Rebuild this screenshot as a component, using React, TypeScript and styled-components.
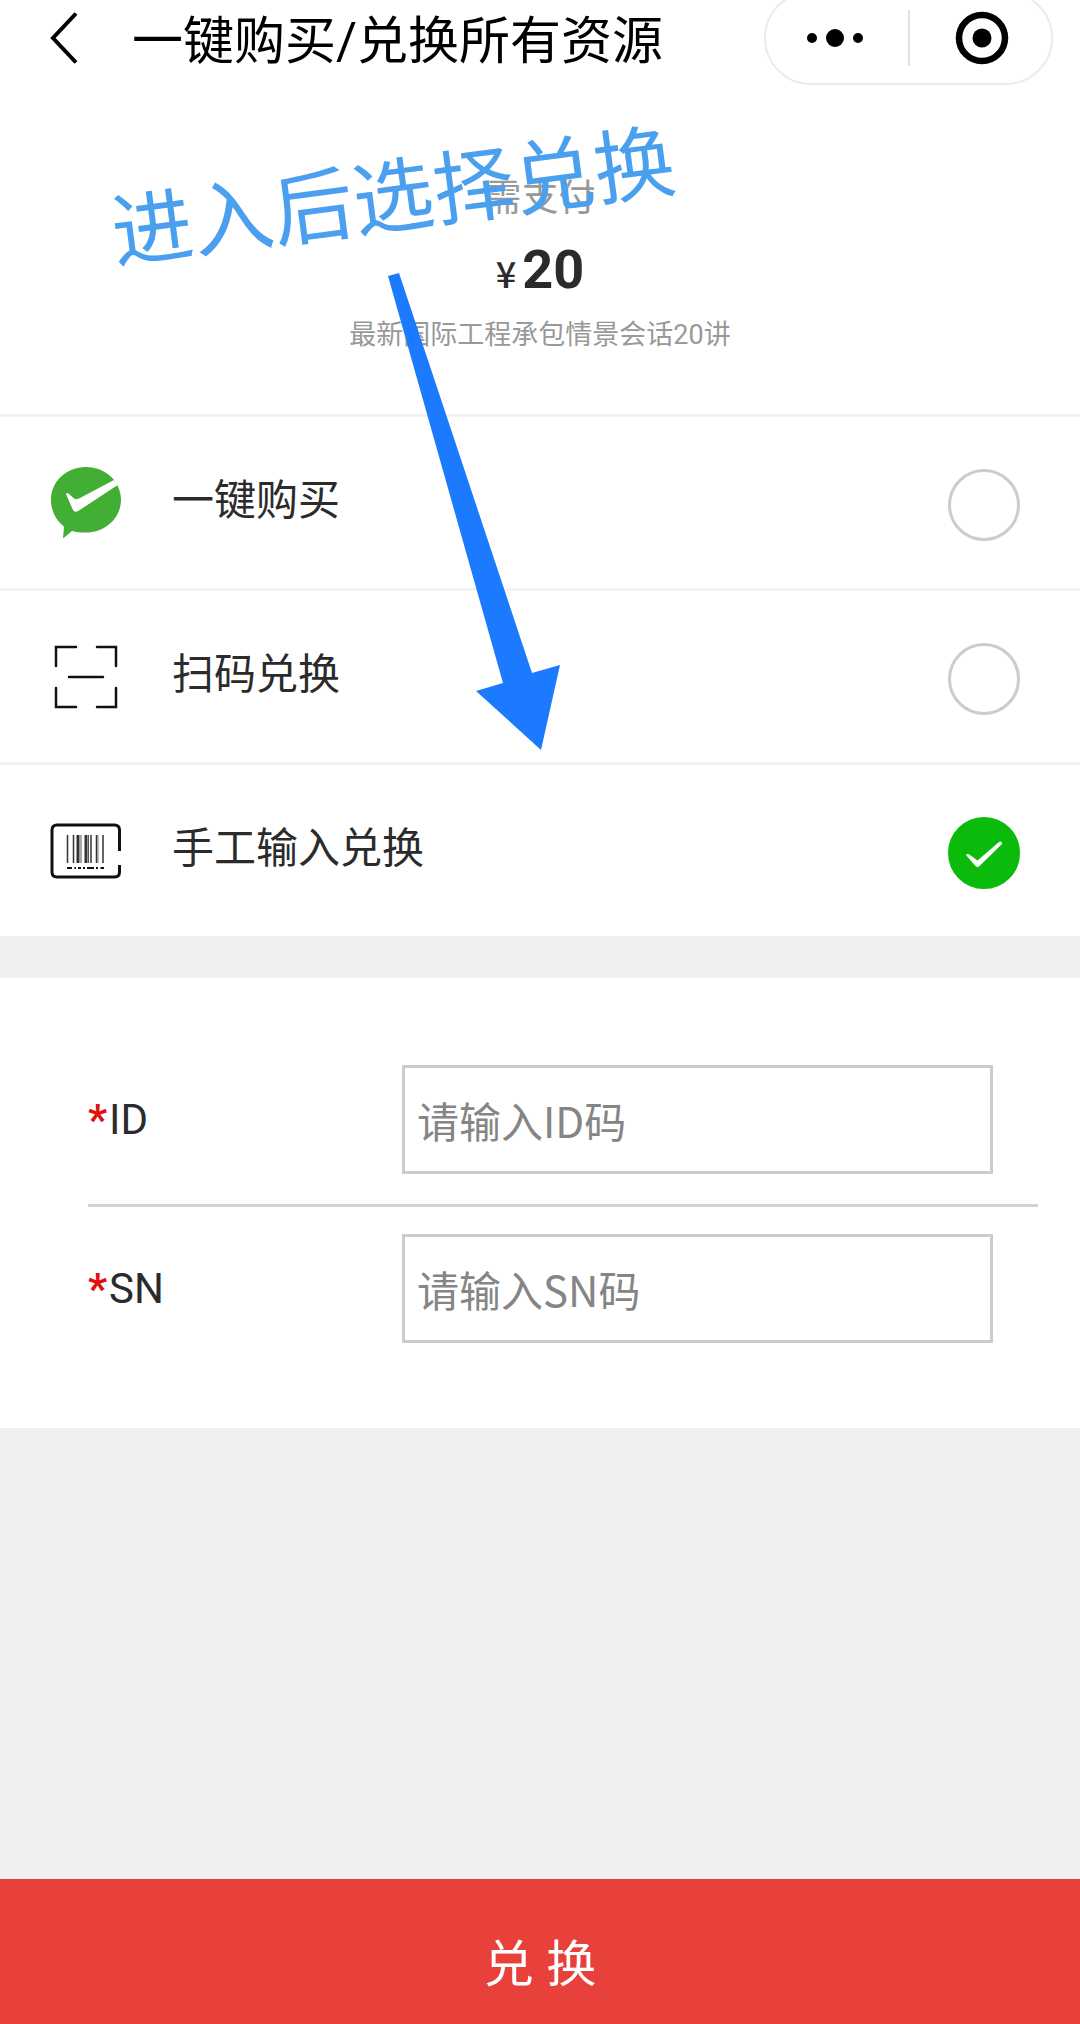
import React, { useState } from "react";
import styled, { createGlobalStyle } from "styled-components";

const GlobalStyle = createGlobalStyle`
  *, *::before, *::after { box-sizing: border-box; }
  body {
    margin: 0;
    background: #f0f0f0;
    color: #2b2b2b;
    font-family: Roboto, "Noto Sans CJK SC", sans-serif;
  }
  button, input { font: inherit; color: inherit; }
`;

const Page = styled.div`
  position: relative;
  display: flex;
  flex-direction: column;
  min-height: 100vh;
  overflow: hidden;
`;

const Top = styled.div`
  background: #fff;
`;

const Header = styled.header`
  display: flex;
  align-items: center;
  height: 76px;
  padding: 0 27px 0 44px;
`;

const IconButton = styled.button`
  display: grid;
  place-items: center;
  padding: 0;
  border: 0;
  background: none;
  color: #000;
`;

const BackButton = styled(IconButton)`
  width: 40px;
  height: 64px;
`;

const Title = styled.h1`
  flex: 1;
  margin: 0 0 0 48px;
  padding-top: 8px;
  color: #000;
  font-size: 51px;
  font-weight: 400;
  line-height: 64px;
  white-space: nowrap;
`;

const Capsule = styled.div`
  display: grid;
  grid-template-columns: 1fr 2px 1fr;
  align-items: center;
  flex: none;
  width: 289px;
  height: 94px;
  border: 2px solid #ebebeb;
  border-radius: 47px;
  > :first-child { padding-right: 4px; }
  > :last-child { padding-left: 4px; }
`;

const CapsuleRule = styled.span`
  height: 56px;
  background: #e0e0e0;
`;

const Summary = styled.section`
  display: flex;
  flex-direction: column;
  align-items: center;
  padding: 96px 24px 54px;
  text-align: center;
`;

const PayLabel = styled.p`
  margin: 0;
  color: #999;
  font-size: 37px;
  line-height: 54px;
`;

const Price = styled.p`
  display: flex;
  align-items: baseline;
  gap: 6px;
  margin: 4px 0 0;
  font-size: 54px;
  font-weight: 700;
  line-height: 80px;
`;

const Currency = styled.span`
  font-family: "Noto Sans CJK SC", sans-serif;
  font-size: 36px;
  font-weight: 500;
  line-height: 36px;
`;

const Product = styled.p`
  margin: 0;
  color: #999;
  font-size: 27px;
  line-height: 50px;
`;

const Methods = styled.div`
  background: #fff;
`;

const Method = styled.label`
  display: flex;
  align-items: center;
  height: 174px;
  padding: 0 60px 0 50px;
  border-top: 3px solid #f3f3f3;
`;

const MethodIcon = styled.span`
  display: grid;
  place-items: center;
  width: 72px;
  margin-right: 50px;
`;

const MethodName = styled.span`
  flex: 1;
  padding-bottom: 4px;
  font-size: 42px;
  line-height: 60px;
`;

const RadioBox = styled.span`
  display: grid;
  padding-top: 4px;
  > * { grid-area: 1 / 1; }
`;

const Radio = styled.input`
  appearance: none;
  width: 72px;
  height: 72px;
  margin: 0;
  border: 3px solid #ccc;
  border-radius: 50%;
  &:checked {
    border-color: #0bbb0b;
    background: #0bbb0b;
  }
`;

const RadioTick = styled.svg`
  pointer-events: none;
`;

const Form = styled.form`
  margin-top: 42px;
  padding: 60px 42px 55px 88px;
  background: #fff;
`;

const Field = styled.div`
  display: grid;
  grid-template-columns: 314px 1fr;
  align-items: center;
  padding: 27px 45px 30px 0;
  & + & { border-top: 3px solid #d4d4d4; }
`;

const FieldLabel = styled.label`
  font-size: 42px;
  line-height: 60px;
`;

const Required = styled.span`
  margin-right: 2px;
  color: #e01010;
  font-weight: 700;
`;

const TextBox = styled.input`
  width: 100%;
  height: 109px;
  padding: 0 12px;
  border: 3px solid #ccc;
  border-radius: 0;
  background: #fff;
  font-family: "Noto Sans CJK SC", sans-serif;
  font-size: 42px;
  &::placeholder { color: #858585; opacity: 1; }
`;

const SubmitButton = styled.button`
  margin-top: auto;
  height: 145px;
  padding: 26px 0 0;
  border: 0;
  background: #e8403a;
  color: #fff;
  font-size: 50px;
  line-height: 64px;
`;

const Note = styled.p`
  position: absolute;
  top: 139px;
  left: 110px;
  margin: 0;
  color: #4aa0ee;
  font-size: 81px;
  line-height: 120px;
  white-space: nowrap;
  transform: rotate(-7.4deg);
  pointer-events: none;
`;

const Arrow = styled.svg`
  position: absolute;
  top: 272px;
  left: 388px;
  pointer-events: none;
`;

const BuyIcon = () => (
  <svg width="72" height="72" viewBox="0 0 72 72" aria-hidden="true">
    <path
      d="M36 0C55.500 0 71 14.500 71 32.700S55.500 65.500 36 65.500C31 65.500 26 65 22 64L13 71.500L14 59.500C6 53.500 1 43.600 1 32.700C1 14.500 16.500 0 36 0Z"
      fill="#42ae34"
    />
    <path
      d="M16 27Q17 25.500 18.500 26.500L24 31.500Q26.500 33 30 31L64 13L68.500 17.500L29 43.500Q24 46.500 22.500 42Z"
      fill="#fff"
    />
  </svg>
);

const ScanIcon = () => (
  <svg width="64" height="64" viewBox="0 0 64 64" fill="none" stroke="#111" strokeWidth="2.500" strokeLinecap="round" aria-hidden="true">
    <path d="M2 21V2H22M43 2H62V21M62 43V62H43M22 62H2V43M15 32H49" />
  </svg>
);

const BarcodeIcon = () => (
  <svg width="72" height="56" viewBox="0 0 72 56" fill="none" stroke="#111" aria-hidden="true">
    <path d="M69.500 28V7Q69.500 2 64.500 2H7Q2 2 2 7V49Q2 54 7 54H64.500Q69.500 54 69.500 49V42" strokeWidth="3" />
    <path d="M17.500 12V40M23.500 12V40M41 12V40M46.500 12V40M53 12V40" strokeWidth="1.500" stroke="#333" />
    <path d="M28 12V40M36 12V40" strokeWidth="3" stroke="#333" />
    <path d="M31 12V40M38.500 12V40" strokeWidth="1" stroke="#555" />
    <path d="M48 12V40" strokeWidth="1" stroke="#777" />
    <path d="M17 45H22M24.500 45H26M28 45H31M33 45H35M37 45H44M46 45H48M50.500 45H54" strokeWidth="2" />
  </svg>
);

const methods = [
  { id: "buy", name: "一键购买", Icon: BuyIcon },
  { id: "scan", name: "扫码兑换", Icon: ScanIcon },
  { id: "manual", name: "手工输入兑换", Icon: BarcodeIcon },
];

const fields = [
  { id: "ID", hint: "请输入ID码" },
  { id: "SN", hint: "请输入SN码" },
];

export default function App() {
  const [method, setMethod] = useState("manual");

  return (
    <Page>
      <GlobalStyle />
      <Top>
        <Header>
          <BackButton type="button" aria-label="返回">
            <svg width="28" height="52" viewBox="0 0 28 52" fill="none" stroke="currentColor" strokeWidth="4">
              <path d="M26 1.500L3 26L26 50.500" />
            </svg>
          </BackButton>
          <Title>一键购买/兑换所有资源</Title>
          <Capsule>
            <IconButton type="button" aria-label="更多">
              <svg width="58" height="20" viewBox="0 0 58 20" fill="currentColor">
                <circle cx="6" cy="10" r="5" />
                <circle cx="29" cy="10" r="9" />
                <circle cx="52" cy="10" r="5" />
              </svg>
            </IconButton>
            <CapsuleRule />
            <IconButton type="button" aria-label="关闭">
              <svg width="54" height="54" viewBox="0 0 54 54">
                <circle cx="27" cy="27" r="23" fill="none" stroke="currentColor" strokeWidth="6.500" />
                <circle cx="27" cy="27" r="9.500" fill="currentColor" />
              </svg>
            </IconButton>
          </Capsule>
        </Header>

        <Summary>
          <PayLabel>需支付</PayLabel>
          <Price>
            <Currency>¥</Currency>20
          </Price>
          <Product>最新国际工程承包情景会话20讲</Product>
        </Summary>
      </Top>

      <Methods role="radiogroup" aria-label="兑换方式">
        {methods.map(({ id, name, Icon }) => (
          <Method key={id}>
            <MethodIcon>
              <Icon />
            </MethodIcon>
            <MethodName>{name}</MethodName>
            <RadioBox>
              <Radio type="radio" name="method" value={id} checked={method === id} onChange={() => setMethod(id)} />
              {method === id && (
                <RadioTick width="72" height="72" viewBox="0 0 72 72" aria-hidden="true">
                  <path d="M18 38Q19 36 22 38L29.500 43.500L51 25Q54 23.500 54 27L31.500 49Q29.500 51 27.500 49Z" fill="#fff" />
                </RadioTick>
              )}
            </RadioBox>
          </Method>
        ))}
      </Methods>

      <Form id="redeem" onSubmit={(e) => e.preventDefault()}>
        {fields.map(({ id, hint }) => (
          <Field key={id}>
            <FieldLabel htmlFor={id}>
              <Required>*</Required>
              {id}
            </FieldLabel>
            <TextBox id={id} type="text" placeholder={hint} />
          </Field>
        ))}
      </Form>

      <SubmitButton type="submit" form="redeem">
        兑 换
      </SubmitButton>

      <Note>进入后选择兑换</Note>
      <Arrow width="172" height="478" viewBox="0 0 172 478" aria-hidden="true">
        <path d="M0 4L11 1L144 401L172 393L153 478L88 419L115 411Z" fill="#1b7afd" />
      </Arrow>
    </Page>
  );
}
